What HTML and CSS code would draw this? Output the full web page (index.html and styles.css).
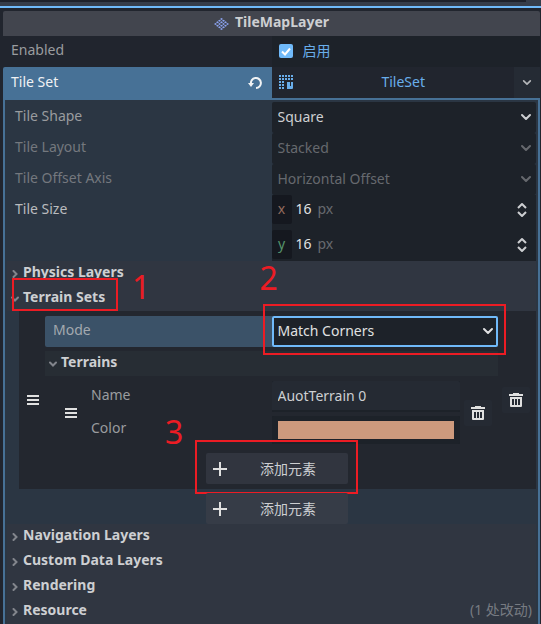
FILE: index.html
```html
<!DOCTYPE html>
<html lang="zh-CN">
<head>
<meta charset="utf-8">
<title>TileMapLayer</title>
<link rel="stylesheet" href="styles.css">
</head>
<body>
<svg class="defs" aria-hidden="true">
  <symbol id="chevron-down" viewBox="0 0 12 8"><path d="M2 2l4 4 4-4" fill="none" stroke="currentColor" stroke-width="2" stroke-linecap="round" stroke-linejoin="round"/></symbol>
  <symbol id="arrow-right" viewBox="0 0 8 8"><path d="M2.500 1l3 3-3 3" fill="none" stroke="currentColor" stroke-width="2" stroke-linecap="round"/></symbol>
  <symbol id="arrow-down" viewBox="0 0 8 8"><path d="M1 2.500l3 3 3-3" fill="none" stroke="currentColor" stroke-width="2" stroke-linecap="round"/></symbol>
  <symbol id="updown" viewBox="0 0 12 16"><path d="M2 6l4-4 4 4M2 10l4 4 4-4" fill="none" stroke="currentColor" stroke-width="2" stroke-linejoin="round"/></symbol>
  <symbol id="grip" viewBox="0 0 12 10"><path d="M0 0h12v2H0zM0 4h12v2H0zM0 8h12v2H0z" fill="currentColor"/></symbol>
  <symbol id="trash" viewBox="0 0 14 14"><path fill-rule="evenodd" fill="currentColor" d="M4 0h6v1h4v2H0V1h4zM1 4h12v9q0 1-1 1H2q-1 0-1-1zM3 6v6h2V6zM6 6v6h2V6zM9 6v6h2V6z"/></symbol>
  <symbol id="plus" viewBox="0 0 14 14"><path d="M6 0h2v6h6v2H8v6H6V8H0V6h6z" fill="currentColor"/></symbol>
  <path id="tile" d="M0-1L1.500 0 0 1-1.500 0z"/>
</svg>

<div class="dock-top"></div>
<main class="inspector">
  <h1 class="class-header">
    <svg class="layer-icon" viewBox="0 0 15 12" fill="#8da5f3" aria-hidden="true">
      <use href="#tile" x="7.500" y="1"/>
      <use href="#tile" x="5.500" y="2.700"/><use href="#tile" x="9.500" y="2.700"/>
      <use href="#tile" x="3.500" y="4.300"/><use href="#tile" x="7.500" y="4.300"/><use href="#tile" x="11.500" y="4.300"/>
      <use href="#tile" x="1.500" y="6"/><use href="#tile" x="5.500" y="6"/><use href="#tile" x="9.500" y="6"/><use href="#tile" x="13.500" y="6"/>
      <use href="#tile" x="3.500" y="7.700"/><use href="#tile" x="7.500" y="7.700"/><use href="#tile" x="11.500" y="7.700"/>
      <use href="#tile" x="5.500" y="9.300"/><use href="#tile" x="9.500" y="9.300"/>
      <use href="#tile" x="7.500" y="11"/>
    </svg>
    TileMapLayer
  </h1>

  <div class="row">
    <label class="name" for="enabled">Enabled</label>
    <div class="value check-value">
      <input type="checkbox" id="enabled" checked>
      <label for="enabled">启用</label>
    </div>
  </div>

  <div class="row resource-row">
    <div class="name">Tile Set
      <button class="plain" aria-label="Revert"><svg width="14" height="12" viewBox="0 0 14 12"><path d="M3 7a5 5 0 1 1 5 4" fill="none" stroke="currentColor" stroke-width="2"/><path d="M0 6h6L3 10z" fill="currentColor"/></svg></button>
    </div>
    <div class="value resource-value">
      <button class="plain resource-button">
        <svg width="14" height="14" viewBox="0 0 14 14" aria-hidden="true"><path fill="currentColor" d="M0 0h2v2H0zM3 0h2v2H3zM6 0h2v2H6zM9 0h2v2H9zM12 0h2v2h-2zM0 3h2v2H0zM3 3h2v2H3zM6 3h2v2H6zM9 3h2v2H9zM12 3h2v2h-2zM0 6h2v2H0zM3 6h2v2H3zM0 9h2v2H0zM3 9h2v2H3zM0 12h2v2H0zM3 12h2v2H3zM8 7h3v4h1V7h2v6q0 1-1 1H8z"/></svg>
        <span>TileSet</span>
      </button>
      <button class="plain resource-menu" aria-label="Options"><svg width="10" height="7"><use href="#chevron-down"/></svg></button>
    </div>
  </div>

  <section class="sub-inspector">
    <div class="row">
      <label class="name" for="shape">Tile Shape</label>
      <div class="value option"><select id="shape"><option>Square</option></select><svg width="12" height="8"><use href="#chevron-down"/></svg></div>
    </div>
    <div class="row disabled">
      <label class="name" for="layout">Tile Layout</label>
      <div class="value option"><select id="layout" disabled><option>Stacked</option></select><svg width="12" height="8"><use href="#chevron-down"/></svg></div>
    </div>
    <div class="row disabled">
      <label class="name" for="axis">Tile Offset Axis</label>
      <div class="value option"><select id="axis" disabled><option>Horizontal Offset</option></select><svg width="12" height="8"><use href="#chevron-down"/></svg></div>
    </div>
    <div class="row size-row">
      <div class="name bright">Tile Size</div>
      <div class="value vector">
        <div class="axis"><label class="axis-x" for="size-x">x</label><input id="size-x" value="16"><span>px</span><svg width="12" height="16"><use href="#updown"/></svg></div>
        <div class="axis"><label class="axis-y" for="size-y">y</label><input id="size-y" value="16"><span>px</span><svg width="12" height="16"><use href="#updown"/></svg></div>
      </div>
    </div>

    <button class="section"><svg width="8" height="8"><use href="#arrow-right"/></svg>Physics Layers</button>
    <button class="section marked"><svg width="8" height="8"><use href="#arrow-down"/></svg>Terrain Sets<span class="mark mark-1"><b>1</b></span></button>

    <div class="indent">
      <div class="array-item">
        <svg class="grip" width="12" height="10"><use href="#grip"/></svg>
        <div class="array-body">
          <div class="row mode-row">
            <label class="name" for="mode">Mode</label>
            <div class="value option focused"><select id="mode"><option>Match Corners</option></select><svg width="12" height="8"><use href="#chevron-down"/></svg><span class="mark mark-2"><b>2</b></span></div>
          </div>
          <button class="section sub-section"><svg width="8" height="8"><use href="#arrow-down"/></svg>Terrains</button>
          <div class="terrain">
            <svg class="grip" width="12" height="10"><use href="#grip"/></svg>
            <div class="terrain-body">
              <div class="row">
                <label class="name" for="name">Name</label>
                <div class="value"><input class="line-edit" id="name" value="AuotTerrain 0"></div>
              </div>
              <div class="row color-row">
                <div class="name">Color</div>
                <div class="value"><button class="color" aria-label="Color"><span></span></button></div>
              </div>
            </div>
            <button class="trash" aria-label="Remove terrain"><svg width="14" height="14"><use href="#trash"/></svg></button>
          </div>
          <div class="inner-add"><button class="add"><svg width="14" height="14"><use href="#plus"/></svg><span>添加元素</span><span class="mark mark-3"><b>3</b></span></button></div>
        </div>
        <button class="trash" aria-label="Remove terrain set"><svg width="14" height="14"><use href="#trash"/></svg></button>
      </div>
      <button class="add"><svg width="14" height="14"><use href="#plus"/></svg><span>添加元素</span></button>
    </div>

    <button class="section"><svg width="8" height="8"><use href="#arrow-right"/></svg>Navigation Layers</button>
    <button class="section"><svg width="8" height="8"><use href="#arrow-right"/></svg>Custom Data Layers</button>
    <button class="section"><svg width="8" height="8"><use href="#arrow-right"/></svg>Rendering</button>
    <button class="section"><svg width="8" height="8"><use href="#arrow-right"/></svg>Resource<span class="changes">(1 处改动)</span></button>
  </section>
</main>
</body>
</html>
```
FILE: styles.css
```css
* { box-sizing: border-box; }

body {
  margin: 0;
  background: #21252e;
  color: #cdcfd2;
  font: 14px/20px "Noto Sans", "Noto Sans CJK SC", sans-serif;
}

button, input, select {
  font: inherit;
  color: inherit;
  border: 0;
  margin: 0;
  padding: 0;
  background: none;
  outline: 0;
}

svg { display: block; flex: none; }
.defs { position: absolute; width: 0; height: 0; }

.dock-top {
  height: 8px;
  background: linear-gradient(#1f222b, #1f222b) no-repeat 0 0 / calc(100% - 15px) 2px #363d4a;
  border-bottom: 2px solid #70bafa;
}

.inspector { padding: 3px 1px 0 3px; }

.class-header {
  display: flex;
  align-items: center;
  justify-content: center;
  gap: 6px;
  height: 25px;
  margin: 0;
  padding-bottom: 4px;
  border-radius: 2px 2px 0 0;
  background: #42454e;
  font-size: 14px;
  font-weight: 700;
}
.layer-icon { width: 15px; height: 12px; margin-top: 4px; }

.row { display: grid; grid-template-columns: 1fr 1fr; min-height: 31px; }
.name { padding: 4px 8px 0; color: #9a9c9f; }
.value { display: flex; align-items: center; min-width: 0; background: #1d2229; }
.bright { color: #b9bbbe; }
.disabled { color: #66696e; }
.disabled .name { color: #74787e; }

.check-value { gap: 10px; padding: 0 0 2px 7px; color: #69aeeb; }
.check-value input {
  appearance: none;
  width: 14px;
  height: 14px;
  border-radius: 2px;
  background: #70bafa url("data:image/svg+xml,%3Csvg xmlns='http://www.w3.org/2000/svg' viewBox='0 0 14 14'%3E%3Cpath d='M3 7.500l3 3 5-6' fill='none' stroke='white' stroke-width='2'/%3E%3C/svg%3E");
}

.resource-row .name {
  display: flex;
  align-items: center;
  justify-content: space-between;
  padding: 0 10px 4px 8px;
  min-height: 33px;
  background: #477196;
  color: #f0f2f4;
  border-top-left-radius: 2px;
}
.resource-row .name svg { margin-top: 2px; }
.resource-value { align-items: stretch; background: #21252e; border-bottom: 2px solid #477196; color: #69aeeb; }
.resource-button { flex: 1; display: flex; align-items: center; padding: 0 0 2px 7px; }
.resource-button span { flex: 1; }
.resource-menu { display: grid; place-items: center; width: 26px; background: #252b34; color: #b4b6b9; }

.sub-inspector {
  padding: 2px 2px 0;
  border: solid #477196;
  border-width: 0 2px;
  background: #2b3643;
}

.option { position: relative; border-radius: 2px; }
.option select { appearance: none; width: 100%; height: 31px; padding: 0 24px 2px 6px; opacity: 1; }
.option > svg { position: absolute; right: 4px; top: 11px; pointer-events: none; }

.size-row { min-height: 66px; }
.vector { flex-direction: column; gap: 4px; align-items: stretch; }
.axis { display: flex; align-items: center; height: 31px; padding: 0 8px 2px 0; }
.axis label { width: 20px; height: 29px; padding-top: 4px; text-align: center; background: #15181f; border-radius: 2px; }
.axis-x { color: #936a5c; }
.axis-y { color: #55936b; }
.axis input { width: 18px; margin: 0 4px; padding-bottom: 2px; color: #e0e1e2; }
.axis span { flex: 1; padding-bottom: 2px; color: #676a6f; }

.section {
  display: flex;
  align-items: center;
  gap: 4px;
  width: 100%;
  height: 25px;
  padding: 0 4px 4px;
  background: #303641;
  font-weight: 700;
  text-align: left;
}
.section > svg { margin-top: 4px; color: #82858c; }
.changes { margin-left: auto; font-weight: 400; color: #777b82; }

.indent { display: flex; flex-direction: column; align-items: center; gap: 4px; padding-left: 12px; }
.array-item { display: flex; align-items: center; width: 100%; padding: 5px 6px 5px 8px; background: #23272f; }
.array-body { flex: 1; min-width: 0; margin: 0 4px 0 6px; }
.grip { color: #e0e0e0; }
.mode-row { background: #3b5268; border-radius: 2px; }
.mode-row .name { color: #a3a9af; }
.focused { box-shadow: inset 0 0 0 2px #70bafa; border-radius: 2px; color: #e0e1e2; }
.sub-section { margin-top: 4px; background: #272d34; }

.terrain { display: flex; align-items: center; padding: 5px 6px 9px 20px; }
.terrain-body { flex: 1; display: grid; gap: 4px; min-width: 0; margin: 0 4px 0 6px; }
.terrain-body .row { min-height: 28px; }
.color-row .name { padding-top: 2px; }
.line-edit { width: 100%; height: 31px; padding: 0 6px; background: #252a33; border-bottom: 2px solid #1d2229; border-radius: 2px; }
.color { width: 100%; height: 28px; padding: 5px 6px; background: #1d2229; border-radius: 2px; }
.color span { display: block; height: 18px; background: #cd9a7d; }
.trash { display: grid; place-items: center; width: 28px; height: 26px; border-radius: 2px; background: #252a33; color: #e0e0e0; }

.inner-add { display: flex; justify-content: center; padding-left: 11px; }
.add { position: relative; display: flex; align-items: center; width: 142px; height: 31px; padding: 0 7px; border-radius: 2px; background: #31353f; }
.indent > .add { background: #363c47; margin-right: 1px; }
.add > svg { color: #e0e0e0; }
.add span { flex: 1; padding-left: 8px; }

/* Numbered tutorial callouts drawn over the panel */
.marked { position: relative; }
.section .mark, .option .mark, .add .mark { position: absolute; padding: 0; border: 2px solid #ec1c24; pointer-events: none; }
.mark b { position: absolute; color: #ec1c24; font: 32px/32px "Noto Sans", sans-serif; }
.section .mark-1 { left: 5px; top: -8px; width: 106px; height: 33px; }
.mark-1 b { left: 118px; top: -9px; }
.option .mark-2 { inset: -12px -8px -8px -9px; }
.mark-2 b { left: -5px; top: -44px; }
.add .mark-3 { inset: -13px -10px -10px -11px; }
.mark-3 b { left: -32px; top: -26px; }
```
